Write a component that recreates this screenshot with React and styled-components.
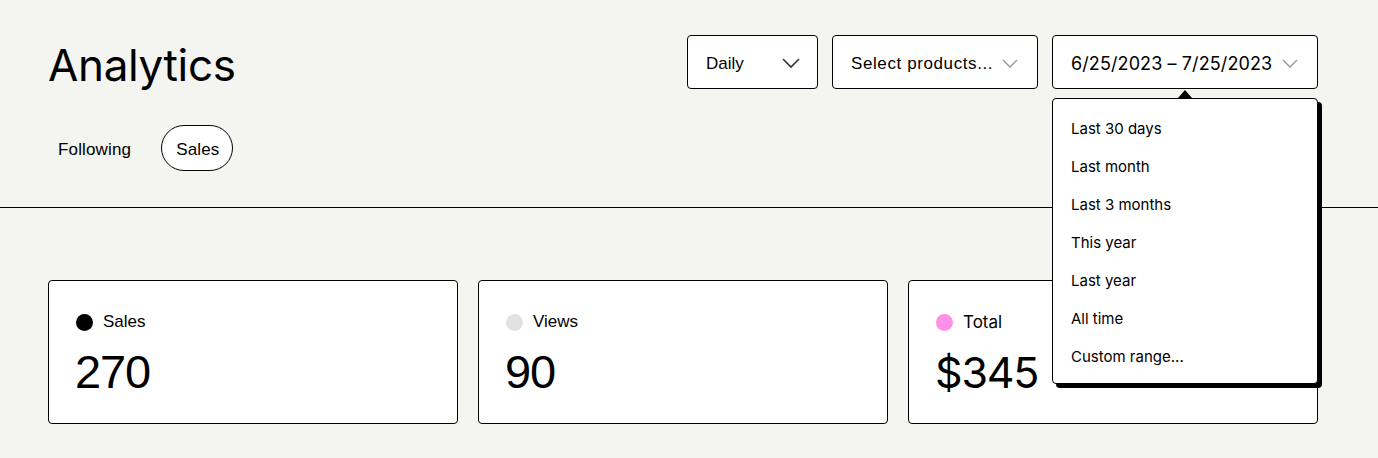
import React from "react";
import styled, { createGlobalStyle } from "styled-components";

const Global = createGlobalStyle`
  * { box-sizing: border-box; }
  html, body { margin: 0; padding: 0; background: #f4f4f0; }
  body { font-family: "Inter", "Liberation Sans", sans-serif; color: #000; }
`;

const Page = styled.div`
  width: 1378px;
  min-height: 458px;
  background: #f4f4f0;
`;

const Header = styled.header`
  padding: 35px 60px 36px 48px;
  border-bottom: 1px solid #000;
  display: flex;
  flex-direction: column;
  gap: 36px;
`;

const TopRow = styled.div`
  display: flex;
  align-items: center;
  justify-content: space-between;
  height: 54px;
`;

const Title = styled.h1`
  margin: 0;
  font-family: "Inter", sans-serif;
  font-weight: 400;
  font-size: 44px;
  letter-spacing: -0.35px;
  line-height: 54px;
  transform: translateY(3px);
`;

const Controls = styled.div`
  display: flex;
  gap: 14px;
`;

const SelectBox = styled.div`
  position: relative;
  height: 54px;
  width: ${(p) => p.$w}px;
  background: #fff;
  border: 1px solid #000;
  border-radius: 4px;
  display: flex;
  align-items: center;
  justify-content: space-between;
  padding: 3px ${(p) => p.$pr}px 0 18px;
  font-family: ${(p) => (p.$inter ? '"Inter", sans-serif' : '"Liberation Sans", Arial, sans-serif')};
  font-size: ${(p) => p.$fs}px;
  letter-spacing: ${(p) => p.$ls || 0}px;
  color: #000;
`;

const Tabs = styled.nav`
  display: flex;
  gap: 16px;
  margin-left: -5px;
`;

const Tab = styled.div`
  height: 46px;
  padding: 3px 13px 0 14px;
  display: flex;
  align-items: center;
  border-radius: 23px;
  border: 1px solid ${(p) => (p.$active ? "#000" : "transparent")};
  background: ${(p) => (p.$active ? "#fff" : "transparent")};
  font-family: "Liberation Sans", Arial, sans-serif;
  font-size: 17px;
  letter-spacing: 0.15px;
`;

const Main = styled.main`
  padding: 72px 60px 34px 48px;
`;

const Cards = styled.div`
  display: grid;
  grid-template-columns: repeat(3, 1fr);
  gap: 20px;
`;

const Card = styled.div`
  height: 144px;
  background: #fff;
  border: 1px solid #000;
  border-radius: 4px;
  padding: 31px 27px;
  display: flex;
  flex-direction: column;
  gap: 11px;
`;

const Label = styled.div`
  display: flex;
  align-items: center;
  gap: 10px;
  height: 24px;
  font-family: ${(p) => (p.$inter ? '"Inter", sans-serif' : '"Liberation Sans", Arial, sans-serif')};
  font-size: 17px;
`;

const Dot = styled.span`
  width: 17px;
  height: 17px;
  border-radius: 50%;
  background: ${(p) => p.$color};
  flex: none;
`;

const Value = styled.div`
  font-family: ${(p) => (p.$inter ? '"Inter", sans-serif' : '"Liberation Sans", Arial, sans-serif')};
  font-size: ${(p) => (p.$inter ? 43 : 47)}px;
  line-height: 58px;
  letter-spacing: -1.2px;
  margin-left: -1px;
`;

const Menu = styled.div`
  position: absolute;
  top: 62px;
  left: -1px;
  width: 266px;
  background: #fff;
  border: 1px solid #000;
  border-radius: 4px;
  box-shadow: 4px 4px 0 #000;
  padding: 10px 0 8px;
  z-index: 10;
  letter-spacing: 0;
  &::before {
    content: "";
    position: absolute;
    top: -9px;
    left: 50%;
    transform: translateX(-50%);
    border-left: 7px solid transparent;
    border-right: 7px solid transparent;
    border-bottom: 8px solid #000;
  }
`;

const MenuItem = styled.div`
  height: 38px;
  display: flex;
  align-items: center;
  padding: 0 18px;
  font-family: "Inter", sans-serif;
  font-size: 15px;
  color: #000;
`;

const Chevron = ({ w, color, sw = 1.6 }) => (
  <svg width={w} height={w / 2 + 2} viewBox={`0 0 ${w} ${w / 2 + 2}`} fill="none">
    <path d={`M1 1 L${w / 2} ${w / 2} L${w - 1} 1`} stroke={color} strokeWidth={sw} />
  </svg>
);

const ranges = [
  "Last 30 days",
  "Last month",
  "Last 3 months",
  "This year",
  "Last year",
  "All time",
  "Custom range...",
];

const stats = [
  { label: "Sales", value: "270", color: "#000" },
  { label: "Views", value: "90", color: "#e2e2e0" },
  { label: "Total", value: "$345", color: "#ff90e8", inter: true },
];

export default function App() {
  return (
    <Page>
      <Global />
      <Header>
        <TopRow>
          <Title>Analytics</Title>
          <Controls>
            <SelectBox $w={131} $pr={17} $fs={17}>
              <span>Daily</span>
              <Chevron w={18} color="#333" />
            </SelectBox>
            <SelectBox $w={206} $pr={19} $fs={17} $ls={0.6}>
              <span>Select products...</span>
              <Chevron w={16} color="#999" sw={1.4} />
            </SelectBox>
            <SelectBox $w={266} $pr={19} $fs={18} $ls={0.1} $inter>
              <span>6/25/2023 – 7/25/2023</span>
              <Chevron w={16} color="#999" sw={1.4} />
              <Menu>
                {ranges.map((r) => (
                  <MenuItem key={r}>{r}</MenuItem>
                ))}
              </Menu>
            </SelectBox>
          </Controls>
        </TopRow>
        <Tabs>
          <Tab>Following</Tab>
          <Tab $active>Sales</Tab>
        </Tabs>
      </Header>
      <Main>
        <Cards>
          {stats.map((s) => (
            <Card key={s.label}>
              <Label $inter={s.inter}>
                <Dot $color={s.color} />
                {s.label}
              </Label>
              <Value $inter={s.inter}>{s.value}</Value>
            </Card>
          ))}
        </Cards>
      </Main>
    </Page>
  );
}
